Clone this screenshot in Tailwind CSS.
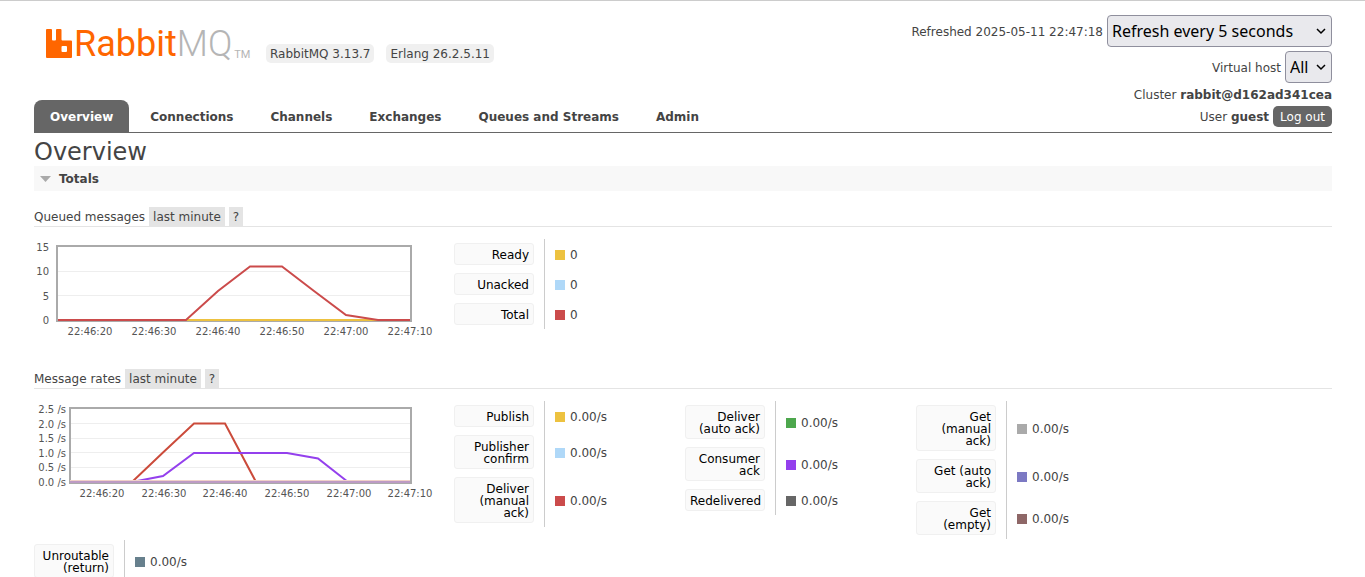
<!DOCTYPE html>
<html lang="en">
<head>
<meta charset="utf-8">
<title>RabbitMQ Management</title>
<script src="https://cdn.jsdelivr.net/npm/@tailwindcss/browser@4"></script>
</head>
<body class="overflow-x-hidden border-t border-[#ccc] bg-white font-['DejaVu_Sans',Verdana,sans-serif] text-xs text-[#444]">
<header class="mr-[33px] ml-[34px] flex justify-between border-b border-[#666] pt-3.5">
  <div class="flex flex-col justify-between">
    <div class="flex items-start pt-2 pl-3">
      <a href="#/" aria-label="RabbitMQ" class="flex w-[206px] items-start whitespace-nowrap font-[Roboto,sans-serif] leading-[42px] text-[#f60]">
        <svg class="mt-1.5 h-[29px] w-[26px] shrink-0" viewBox="0 0 26 29" aria-hidden="true"><path fill="#f60" fill-rule="evenodd" d="M1 0H5Q6 0 6 1V10.500Q6 11.500 7 11.500H9Q10 11.500 10 10.500V1Q10 0 11 0H14.500Q15.500 0 15.500 1V10.500Q15.500 11.500 16.500 11.500H25Q26 11.500 26 12.500V28Q26 29 25 29H1Q0 29 0 28V1Q0 0 1 0ZM15.500 18V22Q15.500 23 16.500 23H20Q21 23 21 22V18Q21 17 20 17H16.500Q15.500 17 15.500 18Z"/></svg>
        <span class="ml-0.5 text-[36px]">Rabbit<span class="font-light text-[#b5b5b5]">MQ</span></span>
        <span class="ml-0.5 pt-[11px] text-[11px] text-[#b5b5b5]">TM</span>
      </a>
      <div class="ml-3.5 flex gap-3 pt-[21px]">
        <span class="rounded-[5px] bg-[#f0f0f0] px-1 pt-[3px] pb-px leading-[15px]">RabbitMQ 3.13.7</span>
        <span class="rounded-[5px] bg-[#f0f0f0] px-1 pt-[3px] pb-px leading-[15px]">Erlang 26.2.5.11</span>
      </div>
    </div>
    <nav class="flex gap-[5px] font-bold leading-4">
      <a href="#/" class="rounded-t-lg bg-[#666] px-4 pt-[9px] pb-[7px] text-white">Overview</a>
      <a href="#/connections" class="px-4 pt-[9px] pb-[7px]">Connections</a>
      <a href="#/channels" class="px-4 pt-[9px] pb-[7px]">Channels</a>
      <a href="#/exchanges" class="px-4 pt-[9px] pb-[7px]">Exchanges</a>
      <a href="#/queues" class="px-4 pt-[9px] pb-[7px]">Queues and Streams</a>
      <a href="#/users" class="px-4 pt-[9px] pb-[7px]">Admin</a>
    </nav>
  </div>
  <div class="flex flex-col items-end pb-[5px]">
    <div class="flex items-center gap-1">
      <label for="refresh" class="pt-0.5">Refreshed 2025-05-11 22:47:18</label>
      <div class="grid items-center">
        <select id="refresh" class="col-start-1 row-start-1 h-8 w-[225px] appearance-none rounded-sm border border-[#8f8f9d] bg-[#e9e9ed] px-1 font-['Noto_Sans',sans-serif] text-base text-black"><option>Refresh every 5 seconds</option></select>
        <svg class="pointer-events-none col-start-1 row-start-1 mr-1.5 h-2 w-2.5 justify-self-end" viewBox="0 0 10 8" fill="none" stroke="#000" stroke-width="1.500" aria-hidden="true"><path d="M1 2L5 6L9 2"/></svg>
      </div>
    </div>
    <div class="mt-1 flex items-center gap-1">
      <label for="vhost" class="pt-0.5">Virtual host</label>
      <div class="grid items-center">
        <select id="vhost" class="col-start-1 row-start-1 h-8 w-[47px] appearance-none rounded-sm border border-[#8f8f9d] bg-[#e9e9ed] px-1 font-['Noto_Sans',sans-serif] text-base text-black"><option>All</option></select>
        <svg class="pointer-events-none col-start-1 row-start-1 mr-1.5 h-2 w-2.5 justify-self-end" viewBox="0 0 10 8" fill="none" stroke="#000" stroke-width="1.500" aria-hidden="true"><path d="M1 2L5 6L9 2"/></svg>
      </div>
    </div>
    <p class="mt-1 leading-4">Cluster <b>rabbit@d162ad341cea</b></p>
    <div class="mt-[3px] flex items-center gap-1"><span>User <b>guest</b></span><button class="rounded-[5px] bg-[#666] px-[7px] pt-[3px] pb-px leading-[17px] text-white">Log out</button></div>
  </div>
</header>

<main class="mr-[33px] ml-[34px]">
  <h1 class="pt-1.5 text-2xl leading-[27px]">Overview</h1>
  <h2 class="flex h-[25px] items-center gap-2 bg-[#f8f8f8] pt-px pl-1.5 font-bold">
    <svg class="h-1.5 w-[11px]" viewBox="0 0 11 6" aria-hidden="true"><path fill="#aaa" d="M0 0H11L5.500 6Z"/></svg>Totals
  </h2>

  <section class="pt-4">
    <h3 class="flex h-5 gap-1 border-b border-[#e4e4e4] leading-[21px]">Queued messages <button class="bg-[#e4e4e4] px-1">last minute</button><button class="bg-[#e4e4e4] px-1">?</button></h3>
    <div class="flex flex-wrap items-start pt-3">
      <svg class="h-[120px] w-[420px]" viewBox="0 0 420 120" font-size="10" fill="#545454" role="img" aria-label="Queued messages">
        <g text-anchor="end"><text x="15" y="12">15</text><text x="15" y="36">10</text><text x="15" y="61">5</text><text x="15" y="85">0</text></g>
        <g text-anchor="middle"><text x="56" y="96">22:46:20</text><text x="120" y="96">22:46:30</text><text x="184" y="96">22:46:40</text><text x="248" y="96">22:46:50</text><text x="312" y="96">22:47:00</text><text x="376" y="96">22:47:10</text></g>
        <path stroke="#eee" d="M23 32.500H377M23 56.500H377"/>
        <rect x="23" y="7" width="354" height="75" fill="none" stroke="#aaa" stroke-width="2"/>
        <path fill="none" stroke="#edc240" stroke-width="2" d="M24 81H376"/>
        <path fill="none" stroke="#cb4b4b" stroke-width="2" d="M24 81H152L184 52L216 27.500H248L280 52L312 76L344 81H376"/>
      </svg>
      <table class="border-separate border-spacing-0">
        <tr><th scope="row" class="border-r border-[#ccc] pr-2.5"><div class="my-1 w-20 rounded-[3px] border border-[#f0f0f0] bg-[#fafafa] px-1 pt-[5px] pb-[3px] text-right font-normal leading-3 text-black">Ready</div></th><td class="pt-0.5 pl-2.5"><div class="flex items-center gap-[5px]"><i class="size-2.5 bg-[#edc240]"></i>0</div></td></tr>
        <tr><th scope="row" class="border-r border-[#ccc] pr-2.5"><div class="my-1 w-20 rounded-[3px] border border-[#f0f0f0] bg-[#fafafa] px-1 pt-[5px] pb-[3px] text-right font-normal leading-3 text-black">Unacked</div></th><td class="pt-0.5 pl-2.5"><div class="flex items-center gap-[5px]"><i class="size-2.5 bg-[#afd8f8]"></i>0</div></td></tr>
        <tr><th scope="row" class="border-r border-[#ccc] pr-2.5"><div class="my-1 w-20 rounded-[3px] border border-[#f0f0f0] bg-[#fafafa] px-1 pt-[5px] pb-[3px] text-right font-normal leading-3 text-black">Total</div></th><td class="pt-0.5 pl-2.5"><div class="flex items-center gap-[5px]"><i class="size-2.5 bg-[#cb4b4b]"></i>0</div></td></tr>
      </table>
    </div>
  </section>

  <section class="pt-2.5">
    <h3 class="flex h-5 gap-1 border-b border-[#e4e4e4] leading-[21px]">Message rates <button class="bg-[#e4e4e4] px-1">last minute</button><button class="bg-[#e4e4e4] px-1">?</button></h3>
    <div class="flex flex-wrap items-start gap-y-px pt-3">
      <svg class="h-[120px] w-[420px]" viewBox="0 0 420 120" font-size="10" fill="#545454" role="img" aria-label="Message rates">
        <g text-anchor="end"><text x="32" y="12">2.5 /s</text><text x="32" y="27">2.0 /s</text><text x="32" y="41">1.5 /s</text><text x="32" y="56">1.0 /s</text><text x="32" y="70">0.5 /s</text><text x="32" y="85">0.0 /s</text></g>
        <g text-anchor="middle"><text x="68" y="96">22:46:20</text><text x="130" y="96">22:46:30</text><text x="191" y="96">22:46:40</text><text x="253" y="96">22:46:50</text><text x="315" y="96">22:47:00</text><text x="376" y="96">22:47:10</text></g>
        <path stroke="#eee" d="M36 22.500H377M36 37.500H377M36 51.500H377M36 66.500H377"/>
        <rect x="36" y="7" width="341" height="75" fill="none" stroke="#aaa" stroke-width="2"/>
        <path fill="none" stroke="#cb4b3b" stroke-width="2" d="M98 81L129 51.500L160 22.500H191L222 81"/>
        <path fill="none" stroke="#9440ed" stroke-width="2" d="M98 81L129 75L160 52H253L284 57.500L314 81"/>
        <path stroke="#f0d0c8" d="M36 79.500H376"/>
        <path stroke="#bd9bc4" stroke-width="2" d="M36 81H376"/>
      </svg>
      <table class="mr-[76px] w-[155px] border-separate border-spacing-0">
        <tr><th scope="row" class="w-[91px] border-r border-[#ccc] pr-2.5"><div class="my-1 w-20 rounded-[3px] border border-[#f0f0f0] bg-[#fafafa] px-1 pt-[5px] pb-[3px] text-right font-normal leading-3 text-black">Publish</div></th><td class="pt-0.5 pl-2.5"><div class="flex items-center gap-[5px]"><i class="size-2.5 bg-[#edc240]"></i>0.00/s</div></td></tr>
        <tr><th scope="row" class="border-r border-[#ccc] pr-2.5"><div class="my-1 w-20 rounded-[3px] border border-[#f0f0f0] bg-[#fafafa] px-1 pt-[5px] pb-[3px] text-right font-normal leading-3 text-black">Publisher confirm</div></th><td class="pt-0.5 pl-2.5"><div class="flex items-center gap-[5px]"><i class="size-2.5 bg-[#afd8f8]"></i>0.00/s</div></td></tr>
        <tr><th scope="row" class="border-r border-[#ccc] pr-2.5"><div class="my-1 w-20 rounded-[3px] border border-[#f0f0f0] bg-[#fafafa] px-1 pt-[5px] pb-[3px] text-right font-normal leading-3 text-black">Deliver (manual ack)</div></th><td class="pt-0.5 pl-2.5"><div class="flex items-center gap-[5px]"><i class="size-2.5 bg-[#cb4b4b]"></i>0.00/s</div></td></tr>
      </table>
      <table class="mr-[76px] w-[155px] border-separate border-spacing-0">
        <tr><th scope="row" class="w-[91px] border-r border-[#ccc] pr-2.5"><div class="my-1 w-20 rounded-[3px] border border-[#f0f0f0] bg-[#fafafa] px-1 pt-[5px] pb-[3px] text-right font-normal leading-3 text-black">Deliver (auto ack)</div></th><td class="pt-0.5 pl-2.5"><div class="flex items-center gap-[5px]"><i class="size-2.5 bg-[#4da74d]"></i>0.00/s</div></td></tr>
        <tr><th scope="row" class="border-r border-[#ccc] pr-2.5"><div class="my-1 w-20 rounded-[3px] border border-[#f0f0f0] bg-[#fafafa] px-1 pt-[5px] pb-[3px] text-right font-normal leading-3 text-black">Consumer ack</div></th><td class="pt-0.5 pl-2.5"><div class="flex items-center gap-[5px]"><i class="size-2.5 bg-[#9440ed]"></i>0.00/s</div></td></tr>
        <tr><th scope="row" class="border-r border-[#ccc] pr-2.5"><div class="my-1 w-20 rounded-[3px] border border-[#f0f0f0] bg-[#fafafa] px-1 pt-[5px] pb-[3px] text-right font-normal leading-3 text-black">Redelivered</div></th><td class="pt-0.5 pl-2.5"><div class="flex items-center gap-[5px]"><i class="size-2.5 bg-[#666]"></i>0.00/s</div></td></tr>
      </table>
      <table class="mr-[76px] w-[155px] border-separate border-spacing-0">
        <tr><th scope="row" class="w-[91px] border-r border-[#ccc] pr-2.5"><div class="my-1 w-20 rounded-[3px] border border-[#f0f0f0] bg-[#fafafa] px-1 pt-[5px] pb-[3px] text-right font-normal leading-3 text-black">Get (manual ack)</div></th><td class="pt-0.5 pl-2.5"><div class="flex items-center gap-[5px]"><i class="size-2.5 bg-[#aaa]"></i>0.00/s</div></td></tr>
        <tr><th scope="row" class="border-r border-[#ccc] pr-2.5"><div class="my-1 w-20 rounded-[3px] border border-[#f0f0f0] bg-[#fafafa] px-1 pt-[5px] pb-[3px] text-right font-normal leading-3 text-black">Get (auto ack)</div></th><td class="pt-0.5 pl-2.5"><div class="flex items-center gap-[5px]"><i class="size-2.5 bg-[#7c79c3]"></i>0.00/s</div></td></tr>
        <tr><th scope="row" class="border-r border-[#ccc] pr-2.5"><div class="my-1 w-20 rounded-[3px] border border-[#f0f0f0] bg-[#fafafa] px-1 pt-[5px] pb-[3px] text-right font-normal leading-3 text-black">Get (empty)</div></th><td class="pt-0.5 pl-2.5"><div class="flex items-center gap-[5px]"><i class="size-2.5 bg-[#8e6767]"></i>0.00/s</div></td></tr>
      </table>
      <table class="mr-[76px] w-[155px] border-separate border-spacing-0">
        <tr><th scope="row" class="w-[91px] border-r border-[#ccc] pr-2.5"><div class="my-1 w-20 rounded-[3px] border border-[#f0f0f0] bg-[#fafafa] px-1 pt-[5px] pb-[3px] text-right font-normal leading-3 text-black">Unroutable (return)</div></th><td class="pt-0.5 pl-2.5"><div class="flex items-center gap-[5px]"><i class="size-2.5 bg-[#67808d]"></i>0.00/s</div></td></tr>
      </table>
    </div>
  </section>
</main>
</body>
</html>
